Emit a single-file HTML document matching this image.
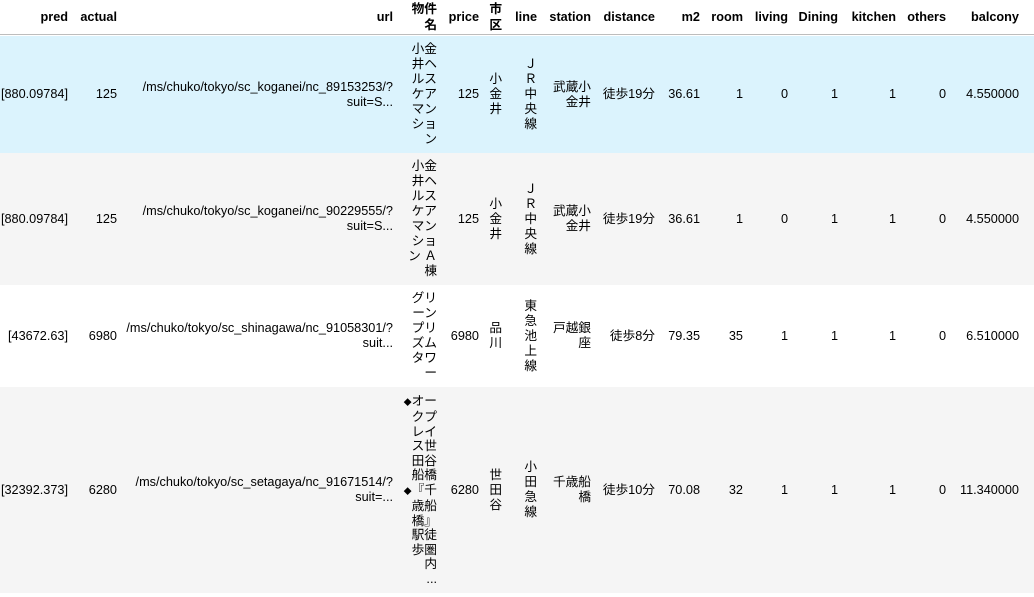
<!DOCTYPE html>
<html><head><meta charset="utf-8"><style>
body{margin:0;width:1034px;height:597px;overflow:hidden;background:#fff;font-family:"Liberation Sans","Noto Sans CJK JP",sans-serif;font-size:12.7px;color:#000}
.r{position:absolute;left:0;width:1034px}
.c{position:absolute;top:0;bottom:0;display:flex;align-items:center;justify-content:flex-end;text-align:right;white-space:nowrap;line-height:15px}
.h .c{font-weight:bold;line-height:16px}
.d{font-size:8px}
</style></head><body>
<div class="r h" style="top:0;height:34px;border-bottom:1px solid #bdbdbd">
<div class="c" style="right:966px">pred</div>
<div class="c" style="right:917px">actual</div>
<div class="c" style="right:641px">url</div>
<div class="c" style="right:597px">物件<br>名</div>
<div class="c" style="right:555px">price</div>
<div class="c" style="right:532px">市<br>区</div>
<div class="c" style="right:497px">line</div>
<div class="c" style="right:443px">station</div>
<div class="c" style="right:379px">distance</div>
<div class="c" style="right:334px">m2</div>
<div class="c" style="right:291px">room</div>
<div class="c" style="right:246px">living</div>
<div class="c" style="right:196px">Dining</div>
<div class="c" style="right:138px">kitchen</div>
<div class="c" style="right:88px">others</div>
<div class="c" style="right:15px">balcony</div>
</div>

<div class="r" style="top:36px;height:117px;background:#dbf3fd">
<div class="c" style="right:966px">[880.09784]</div>
<div class="c" style="right:917px">125</div>
<div class="c" style="right:641px">/ms/chuko/tokyo/sc_koganei/nc_89153253/?<br>suit=S...</div>
<div class="c" style="right:597px">小金<br>井ヘ<br>ルス<br>ケア<br>マン<br>ショ<br>ン</div>
<div class="c" style="right:555px">125</div>
<div class="c" style="right:532px">小<br>金<br>井</div>
<div class="c" style="right:497px">Ｊ<br>Ｒ<br>中<br>央<br>線</div>
<div class="c" style="right:443px">武蔵小<br>金井</div>
<div class="c" style="right:379px">徒歩19分</div>
<div class="c" style="right:334px">36.61</div>
<div class="c" style="right:291px">1</div>
<div class="c" style="right:246px">0</div>
<div class="c" style="right:196px">1</div>
<div class="c" style="right:138px">1</div>
<div class="c" style="right:88px">0</div>
<div class="c" style="right:15px">4.550000</div>
</div>

<div class="r" style="top:153px;height:132px;background:#f5f5f5">
<div class="c" style="right:966px">[880.09784]</div>
<div class="c" style="right:917px">125</div>
<div class="c" style="right:641px">/ms/chuko/tokyo/sc_koganei/nc_90229555/?<br>suit=S...</div>
<div class="c" style="right:597px">小金<br>井ヘ<br>ルス<br>ケア<br>マン<br>ショ<br>ン Ａ<br>棟</div>
<div class="c" style="right:555px">125</div>
<div class="c" style="right:532px">小<br>金<br>井</div>
<div class="c" style="right:497px">Ｊ<br>Ｒ<br>中<br>央<br>線</div>
<div class="c" style="right:443px">武蔵小<br>金井</div>
<div class="c" style="right:379px">徒歩19分</div>
<div class="c" style="right:334px">36.61</div>
<div class="c" style="right:291px">1</div>
<div class="c" style="right:246px">0</div>
<div class="c" style="right:196px">1</div>
<div class="c" style="right:138px">1</div>
<div class="c" style="right:88px">0</div>
<div class="c" style="right:15px">4.550000</div>
</div>

<div class="r" style="top:285px;height:102px;background:#fff">
<div class="c" style="right:966px">[43672.63]</div>
<div class="c" style="right:917px">6980</div>
<div class="c" style="right:641px">/ms/chuko/tokyo/sc_shinagawa/nc_91058301/?<br>suit...</div>
<div class="c" style="right:597px">グリ<br>ーン<br>プリ<br>ズム<br>タワ<br>ー</div>
<div class="c" style="right:555px">6980</div>
<div class="c" style="right:532px">品<br>川</div>
<div class="c" style="right:497px">東<br>急<br>池<br>上<br>線</div>
<div class="c" style="right:443px">戸越銀<br>座</div>
<div class="c" style="right:379px">徒歩8分</div>
<div class="c" style="right:334px">79.35</div>
<div class="c" style="right:291px">35</div>
<div class="c" style="right:246px">1</div>
<div class="c" style="right:196px">1</div>
<div class="c" style="right:138px">1</div>
<div class="c" style="right:88px">0</div>
<div class="c" style="right:15px">6.510000</div>
</div>

<div class="r" style="top:387px;height:206px;background:#f5f5f5">
<div class="c" style="right:966px">[32392.373]</div>
<div class="c" style="right:917px">6280</div>
<div class="c" style="right:641px">/ms/chuko/tokyo/sc_setagaya/nc_91671514/?<br>suit=...</div>
<div class="c" style="right:597px;line-height:14.5px"><span><span class="d">◆</span>オー<br>クプ<br>レイ<br>ス世<br>田谷<br>船橋<br><span class="d">◆</span>『千<br>歳船<br>橋』<br>駅徒<br>歩圏<br>内<br>...</span></div>
<div class="c" style="right:555px">6280</div>
<div class="c" style="right:532px">世<br>田<br>谷</div>
<div class="c" style="right:497px">小<br>田<br>急<br>線</div>
<div class="c" style="right:443px">千歳船<br>橋</div>
<div class="c" style="right:379px">徒歩10分</div>
<div class="c" style="right:334px">70.08</div>
<div class="c" style="right:291px">32</div>
<div class="c" style="right:246px">1</div>
<div class="c" style="right:196px">1</div>
<div class="c" style="right:138px">1</div>
<div class="c" style="right:88px">0</div>
<div class="c" style="right:15px">11.340000</div>
</div>
</body></html>
